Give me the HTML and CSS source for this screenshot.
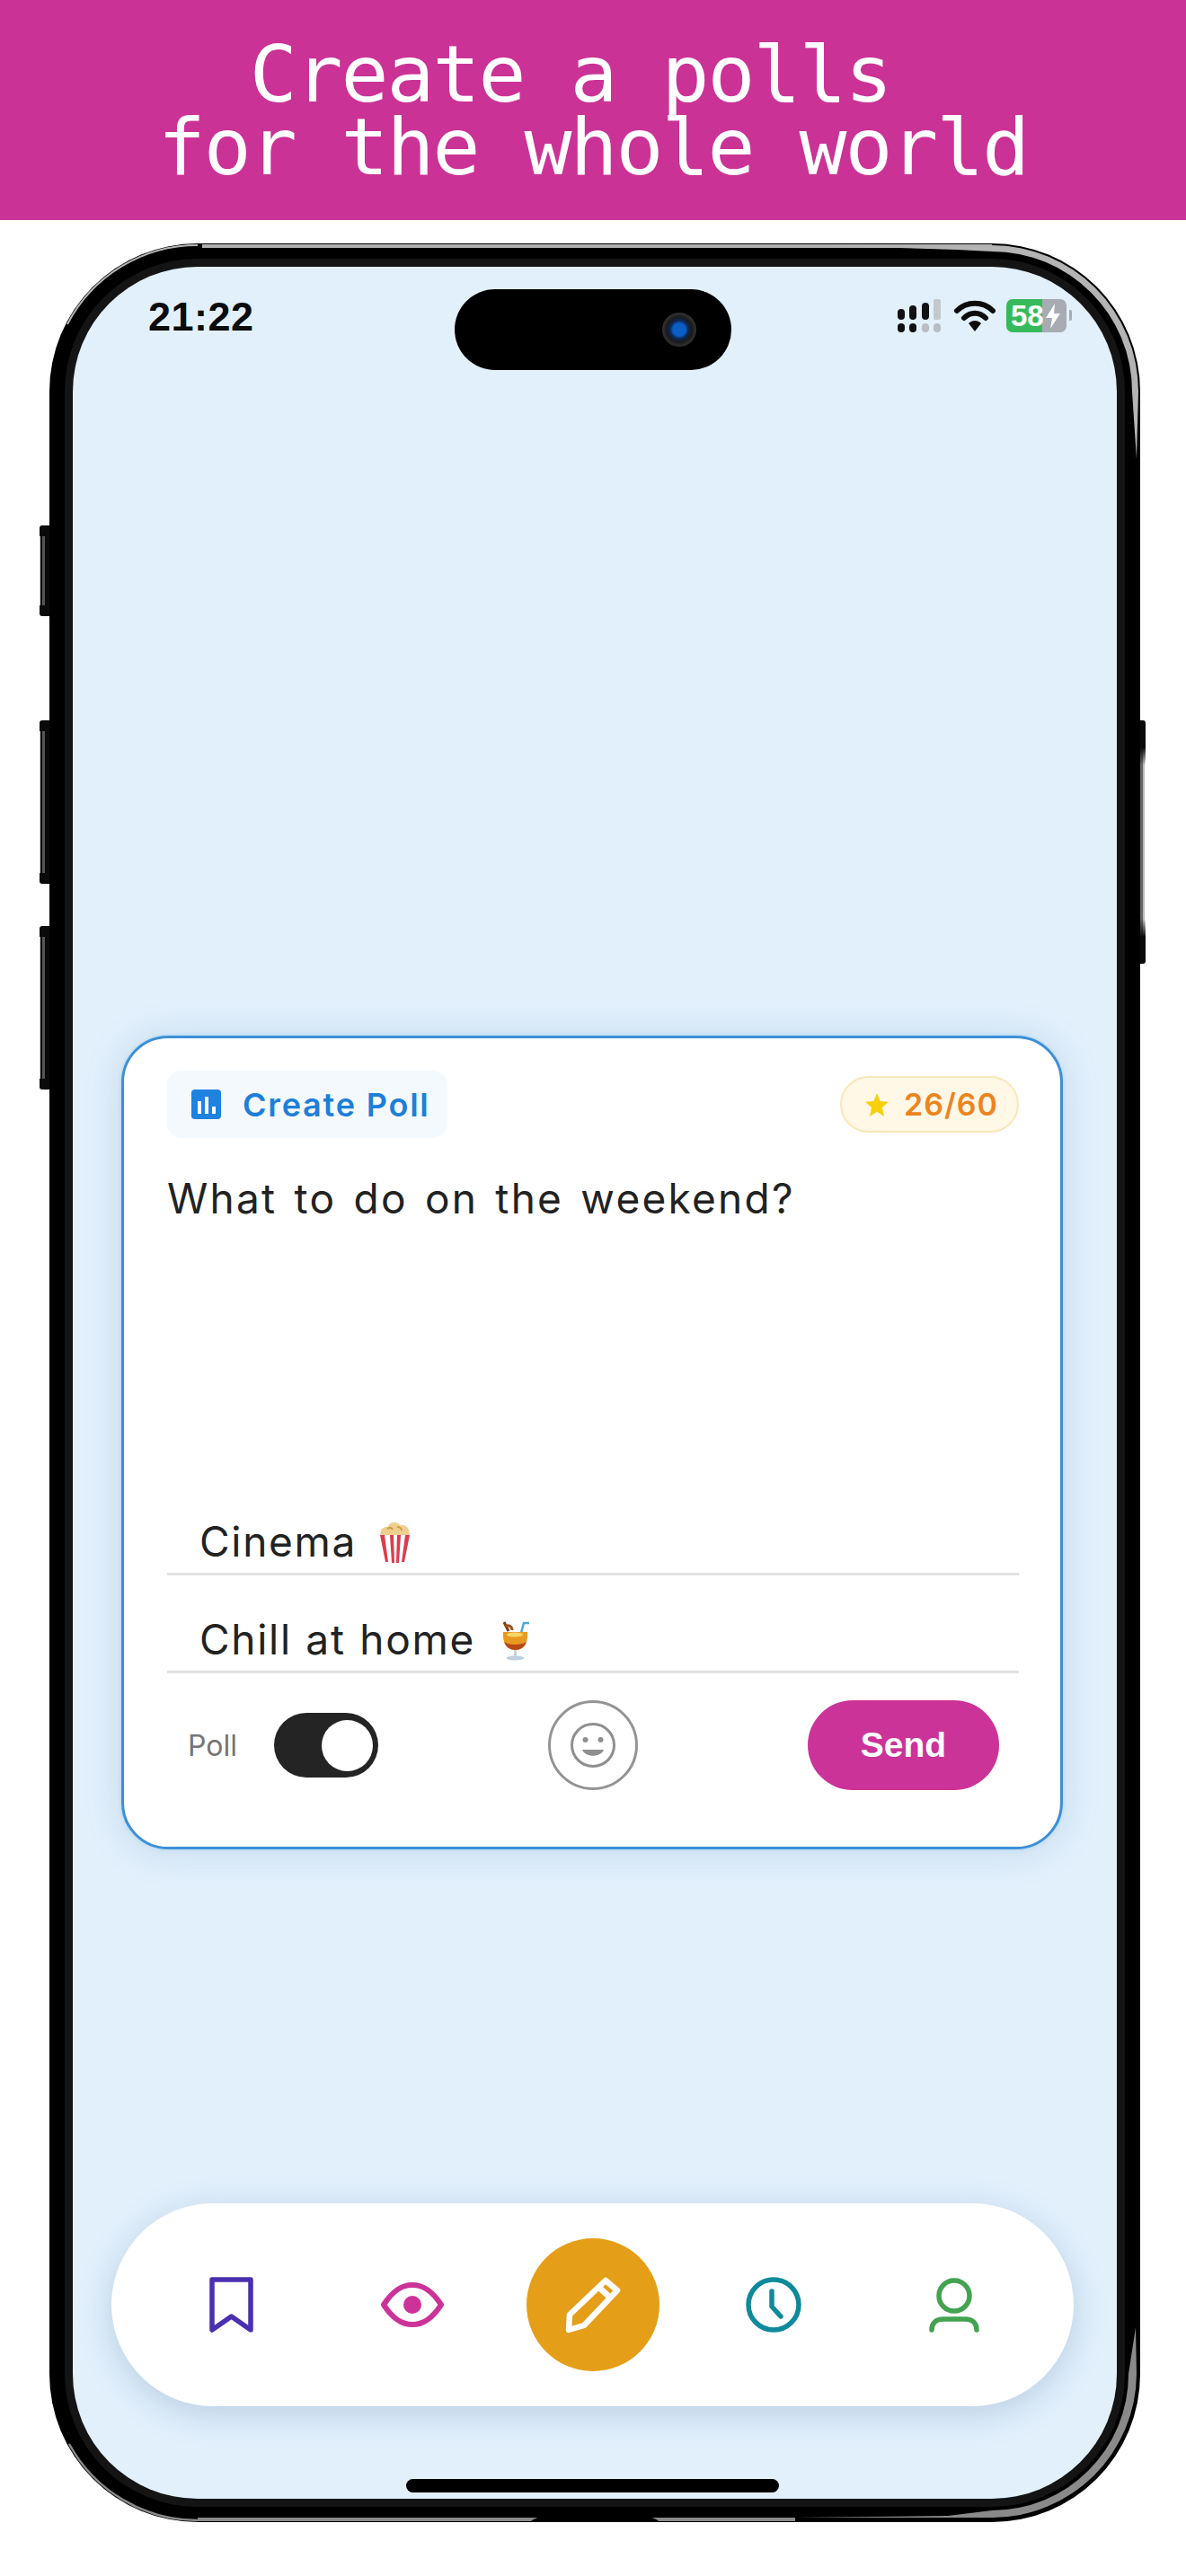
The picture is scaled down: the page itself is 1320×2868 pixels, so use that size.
FILE: index.html
```html
<!DOCTYPE html>
<html>
<head>
    <title>Create a polls</title>
    <link rel="stylesheet" href="styles.css">
</head>
<body>

    <div class="banner">
        <div class="banner-line">Create a polls </div>
        <div class="banner-line">for the whole world</div>
    </div>

    <div class="phone">
        <span class="side-btn mute"></span>
        <span class="side-btn vol-up"></span>
        <span class="side-btn vol-down"></span>
        <span class="side-btn power"></span>

        <div class="bezel">
            <div class="screen">

                <div class="status-bar">
                    <span class="time">21:22</span>
                    <div class="status-icons">
                        <svg class="signal" viewBox="0 0 48 37" width="48" height="37">
                            <rect x="0" y="11" width="8" height="12" rx="4" fill="#111"/>
                            <rect x="13" y="7" width="8" height="16" rx="4" fill="#111"/>
                            <rect x="27" y="4" width="8" height="19" rx="4" fill="#111"/>
                            <rect x="40" y="0" width="8" height="23" rx="2" fill="#c3c8ce"/>
                            <rect x="0" y="27" width="8" height="10" rx="4" fill="#111"/>
                            <rect x="13" y="27" width="8" height="10" rx="4" fill="#111"/>
                            <rect x="27" y="27" width="8" height="10" rx="4" fill="#b9bec5"/>
                            <rect x="40" y="27" width="8" height="10" rx="4" fill="#b9bec5"/>
                        </svg>
                        <svg class="wifi" viewBox="0 0 46 36" width="46" height="36">
                            <path d="M3 13C14 2 32 2 43 13" fill="none" stroke="#0c0c0c" stroke-width="6" stroke-linecap="round"/>
                            <path d="M11 21C18 14 28 14 35 21" fill="none" stroke="#0c0c0c" stroke-width="6" stroke-linecap="round"/>
                            <path d="M16 27C20 23 26 23 30 27L23 36Z" fill="#0c0c0c"/>
                        </svg>
                        <div class="battery">
                            <span class="battery-level">58</span>
                            <svg class="bolt" viewBox="0 0 16 28" width="16" height="28">
                                <path d="M10 0L0 16H7L5 28L16 11H9Z" fill="#fff"/>
                            </svg>
                        </div>
                        <span class="battery-nub"></span>
                    </div>
                </div>

                <div class="island">
                    <span class="camera"></span>
                </div>

                <div class="poll-card">
                    <div class="card-header">
                        <div class="create-tag">
                            <svg class="tag-icon" viewBox="0 0 33 33" width="33" height="33">
                                <rect width="33" height="33" rx="4" fill="#1e82e0"/>
                                <rect x="7" y="13" width="4" height="14" fill="#fff"/>
                                <rect x="15" y="8" width="4" height="19" fill="#fff"/>
                                <rect x="23" y="19" width="4" height="8" fill="#fff"/>
                            </svg>
                            <span>Create Poll</span>
                        </div>
                        <div class="stars">
                            <svg class="star-icon" viewBox="0 0 26 26" width="26" height="26">
                                <path d="M13 0L16.6 8.9L26 9.8L18.9 16.1L21 26L13 20.8L5 26L7.100 16.100L0 9.800L9.400 8.900Z" fill="#f7cf0a"/>
                            </svg>
                            <span>26/60</span>
                        </div>
                    </div>

                    <div class="question">What to do on the weekend?</div>

                    <div class="option">
                        <span>Cinema</span>
                        <svg class="emoji popcorn" viewBox="0 0 37 46" width="37" height="46">
                            <path d="M3 16C0 8 8 5 11 6C12 1 21 -1 24 4C30 2 37 9 34 16Z" fill="#efcf8d"/>
                            <path d="M10 8C13 6 15 7 16 9M21 6C24 6 26 8 26 10" fill="none" stroke="#c99c4c" stroke-width="2"/>
                            <path d="M2 15H35L29 45C22 46 15 46 8 45Z" fill="#fff"/>
                            <path d="M2 15H7L11 45H8Z M13 15H17L18 46H15Z M21 15H25L23 46H20Z M30 15H35L29 45H26Z" fill="#dc3d4e"/>
                        </svg>
                    </div>
                    <div class="option">
                        <span>Chill at home</span>
                        <svg class="emoji cocktail" viewBox="0 0 31 44" width="31" height="44">
                            <path d="M22 13L25 2H31" fill="none" stroke="#4fa8df" stroke-width="2.500"/>
                            <path d="M3 1L8 11" stroke="#7a3c12" stroke-width="3"/>
                            <path d="M4 6C8 3 12 6 12 10" fill="none" stroke="#9a5320" stroke-width="3"/>
                            <path d="M2 12H29C30 22 26 32 15.500 32C5 32 1 22 2 12Z" fill="#e89a1f"/>
                            <path d="M3 23C8 27 22 27 28 23C26 29 21 32 15.500 32C10 32 5 29 3 23Z" fill="#b7481a"/>
                            <ellipse cx="15" cy="15" rx="9" ry="2.500" fill="#f7d66a"/>
                            <rect x="14" y="32" width="3" height="8" fill="#c9d3dc"/>
                            <ellipse cx="15.500" cy="41" rx="10" ry="2.500" fill="#bcd0df"/>
                        </svg>
                    </div>

                    <div class="card-footer">
                        <div class="poll-switch">
                            <span class="switch-label">Poll</span>
                            <div class="toggle"><span class="knob"></span></div>
                        </div>
                        <div class="emoji-btn">
                            <svg viewBox="0 0 50 50" width="50" height="50">
                                <circle cx="25" cy="25" r="23.500" fill="none" stroke="#8f8f8f" stroke-width="3"/>
                                <circle cx="16.500" cy="19" r="3" fill="#8f8f8f"/>
                                <circle cx="33.500" cy="19" r="3" fill="#8f8f8f"/>
                                <path d="M13 30H37C34 39 16 39 13 30Z" fill="#8f8f8f"/>
                            </svg>
                        </div>
                        <button class="send-btn" type="button">Send</button>
                    </div>
                </div>

                <div class="bottom-nav">
                    <div class="nav-item">
                        <svg viewBox="0 0 49 62" width="49" height="62">
                            <path d="M3 3H46V59L24.500 44L3 59Z" fill="none" stroke="#4a2fb0" stroke-width="5.500" stroke-linejoin="round"/>
                        </svg>
                    </div>
                    <div class="nav-item">
                        <svg viewBox="0 0 70 50" width="70" height="50">
                            <path d="M3 25C14 8 24 3 35 3C46 3 56 8 67 25C56 42 46 47 35 47C24 47 14 42 3 25Z" fill="none" stroke="#cc3399" stroke-width="6" stroke-linejoin="round"/>
                            <circle cx="35" cy="25" r="10" fill="#cc3399"/>
                        </svg>
                    </div>
                    <div class="nav-item">
                        <div class="nav-main">
                            <svg viewBox="0 0 62 63" width="62" height="63">
                                <path d="M45 4L58 15L21 54L4 59L5 42Z M37 11L50 23" fill="none" stroke="#fff" stroke-width="6.500" stroke-linejoin="round"/>
                            </svg>
                        </div>
                    </div>
                    <div class="nav-item">
                        <svg viewBox="0 0 62 62" width="62" height="62">
                            <circle cx="31" cy="31" r="28" fill="none" stroke="#0f8a9c" stroke-width="5.500"/>
                            <path d="M29 16V33L39 44" fill="none" stroke="#0f8a9c" stroke-width="5.500" stroke-linecap="round" stroke-linejoin="round"/>
                        </svg>
                    </div>
                    <div class="nav-item">
                        <svg viewBox="0 0 56 62" width="56" height="62">
                            <circle cx="28" cy="21" r="17" fill="none" stroke="#43a351" stroke-width="5.500"/>
                            <path d="M3 59C3 51 8 47 16 47H40C48 47 53 51 53 59" fill="none" stroke="#43a351" stroke-width="5.500" stroke-linecap="round"/>
                        </svg>
                    </div>
                </div>

                <div class="home-bar"></div>
            </div>
        </div>

        <svg class="frame-shine" viewBox="0 0 1214 2537" width="1214" height="2537">
            <path d="M170 1H1049V5H170Z" fill="#b0b0b0"/>
            <path d="M842 2H1049A163 163 0 0 1 1212 165L1210 240L1205 165A156 156 0 0 0 1049 9L1010 7Z" fill="#b4b4b4"/>
            <path d="M165 2A163 163 0 0 0 20 90" fill="none" stroke="#b4b4b4" stroke-width="2"/>
            <path d="M830 2532H1049A161 161 0 0 0 1210 2372L1209 2320L1201 2372A152 152 0 0 1 1049 2524L1000 2530Z" fill="#8a8a8a"/>
            <path d="M165 2535A163 163 0 0 1 22 2450" fill="none" stroke="#8a8a8a" stroke-width="2.500"/>
            <path d="M165 2532H830V2536H165Z" fill="#8a8a8a"/>
            <path d="M535 2537C540 2532 545 2531 552 2531H662C669 2531 674 2532 679 2537Z" fill="#000"/>
        </svg>
    </div>

</body>
</html>
```

FILE: styles.css
```css
body {
    margin: 0;
    background-color: #fff;
    font-family: Inter, "Liberation Sans", sans-serif;
}

.banner {
    height: 245px;
    padding-top: 42px;
    box-sizing: border-box;
    background-color: #cb3296;
    color: #fff;
    font-family: "DejaVu Sans Mono", monospace;
    font-size: 88px;
    line-height: 81px;
    letter-spacing: -2px;
    text-align: center;
}

.banner-line {
    white-space: pre;
}

.phone {
    position: relative;
    width: 1214px;
    height: 2537px;
    margin: 26px 0 0 55px;
    background-color: #000;
    border-radius: 165px;
}

.frame-shine {
    position: absolute;
    top: 0;
    left: 0;
}

.side-btn {
    position: absolute;
    left: -11px;
    width: 11px;
    border-radius: 3px 0 0 3px;
    background:
        linear-gradient(#0a0a0a 0 12px, transparent 12px calc(100% - 12px), #0a0a0a 0),
        linear-gradient(90deg, #ccc 0 1px, #0a0a0a 1px 3px, #555 3px 6px, #0a0a0a 6px);
}

.mute { top: 314px; height: 101px; }
.vol-up { top: 531px; height: 182px; }
.vol-down { top: 760px; height: 182px; }

.power {
    left: auto;
    right: -6px;
    top: 531px;
    width: 6px;
    height: 271px;
    border-radius: 0 3px 3px 0;
    background:
        linear-gradient(#0a0a0a 0 30px, transparent 50px calc(100% - 50px), #0a0a0a calc(100% - 30px)),
        linear-gradient(90deg, #666 0 3px, #bbb 3px 5px, #fff 5px);
}

.bezel {
    position: absolute;
    top: 17px;
    left: 17px;
    right: 17px;
    bottom: 17px;
    padding: 9px;
    background-color: #141414;
    border-radius: 148px;
}

.screen {
    position: relative;
    width: 1162px;
    height: 2485px;
    background-color: #e2f0fc;
    border-radius: 139px;
    overflow: hidden;
}

.status-bar {
    display: flex;
    justify-content: space-between;
    align-items: flex-start;
    height: 36px;
    padding: 34px 50px 0 84px;
}

.time {
    font-family: "Liberation Sans", sans-serif;
    font-size: 45px;
    line-height: 44px;
    font-weight: bold;
    letter-spacing: 0.5px;
    color: #0c0c0c;
}

.status-icons {
    display: flex;
    align-items: flex-start;
    margin-top: 2px;
}

.wifi {
    margin-left: 15px;
}

.battery {
    display: flex;
    align-items: center;
    gap: 2px;
    width: 67px;
    height: 37px;
    margin-left: 12px;
    padding-left: 5px;
    box-sizing: border-box;
    border-radius: 7px;
    background: linear-gradient(90deg, #36ba5b 60%, #a6abb4 60%);
    color: #fff;
    font-family: "Liberation Sans", sans-serif;
    font-size: 33px;
    font-weight: bold;
}

.battery-nub {
    width: 3px;
    height: 12px;
    margin: 12px 0 0 3px;
    background-color: #a6abb4;
    border-radius: 0 2px 2px 0;
}

.island {
    position: absolute;
    top: 25px;
    left: 425px;
    width: 308px;
    height: 90px;
    background-color: #000;
    border-radius: 45px;
}

.camera {
    position: absolute;
    top: 26px;
    left: 231px;
    width: 38px;
    height: 38px;
    border-radius: 50%;
    background: radial-gradient(circle, #0a5ec4 0 7px, #0a2a5c 10px, #1a1a1a 14px, #333 19px);
}

.poll-card {
    display: flex;
    flex-direction: column;
    width: 1048px;
    height: 906px;
    margin: 786px 0 0 54px;
    padding: 36px 46px 0 48px;
    box-sizing: border-box;
    background-color: #fff;
    border: 3px solid #3d8fd6;
    border-radius: 52px;
    box-shadow: 0 0 4px #a8d8fb, 0 2px 40px rgba(90, 130, 170, 0.22);
}

.card-header {
    display: flex;
    justify-content: space-between;
    align-items: center;
}

.create-tag {
    display: flex;
    align-items: center;
    gap: 24px;
    width: 312px;
    height: 75px;
    padding-left: 27px;
    box-sizing: border-box;
    background-color: #f4f9fd;
    border-radius: 16px;
    color: #1e7fd8;
    font-size: 36px;
    font-weight: 600;
    letter-spacing: 1.8px;
}

.stars {
    display: flex;
    align-items: center;
    gap: 17px;
    width: 199px;
    height: 63px;
    padding-left: 26px;
    box-sizing: border-box;
    background-color: #fff8e6;
    border: 2px solid #fbe6b8;
    border-radius: 32px;
    color: #ec8420;
    font-size: 34px;
    font-weight: 600;
    letter-spacing: 1px;
}

.question {
    flex: 1;
    padding-top: 39px;
    font-size: 46px;
    line-height: 56px;
    letter-spacing: 2.25px;
    word-spacing: 4px;
    color: #222;
}

.option {
    display: flex;
    align-items: flex-end;
    height: 109px;
    padding: 0 0 7px 36px;
    box-sizing: border-box;
    border-bottom: 3px solid #e2e2e2;
    font-size: 46px;
    line-height: 56px;
    letter-spacing: 1.7px;
    word-spacing: 1px;
    color: #222;
}

.emoji {
    margin-bottom: 4px;
}

.popcorn {
    margin-left: 24px;
}

.cocktail {
    margin-left: 29px;
}

.card-footer {
    display: flex;
    justify-content: space-between;
    align-items: center;
    height: 100px;
    margin: 30px 22px 63px 23px;
}

.poll-switch {
    display: flex;
    align-items: center;
    gap: 39px;
}

.switch-label {
    width: 57px;
    font-size: 32px;
    color: #757575;
}

.toggle {
    display: flex;
    justify-content: flex-end;
    align-items: center;
    width: 116px;
    height: 72px;
    padding-right: 6px;
    box-sizing: border-box;
    background-color: #242424;
    border-radius: 36px;
}

.knob {
    width: 57px;
    height: 57px;
    background-color: #fff;
    border-radius: 50%;
}

.emoji-btn {
    display: flex;
    justify-content: center;
    align-items: center;
    width: 100px;
    height: 100px;
    box-sizing: border-box;
    border: 3px solid #949494;
    border-radius: 50%;
}

.send-btn {
    width: 213px;
    height: 100px;
    background-color: #cc3399;
    color: #fff;
    border: none;
    border-radius: 50px;
    font-family: "Liberation Sans", sans-serif;
    font-size: 39px;
    font-weight: bold;
    cursor: pointer;
}

.bottom-nav {
    display: grid;
    grid-template-columns: repeat(5, 201px);
    align-items: center;
    justify-items: center;
    width: 1071px;
    height: 226px;
    margin: 394px 0 0 43px;
    padding-left: 33px;
    box-sizing: border-box;
    background-color: #fff;
    border-radius: 113px;
    box-shadow: 0 8px 36px rgba(90, 130, 170, 0.3);
}

.nav-item {
    display: flex;
    justify-content: center;
    align-items: center;
}

.nav-main {
    display: flex;
    justify-content: center;
    align-items: center;
    width: 148px;
    height: 148px;
    background-color: #e59e18;
    border-radius: 50%;
}

.home-bar {
    position: absolute;
    left: 371px;
    bottom: 7px;
    width: 415px;
    height: 15px;
    background-color: #000;
    border-radius: 8px;
}
```
